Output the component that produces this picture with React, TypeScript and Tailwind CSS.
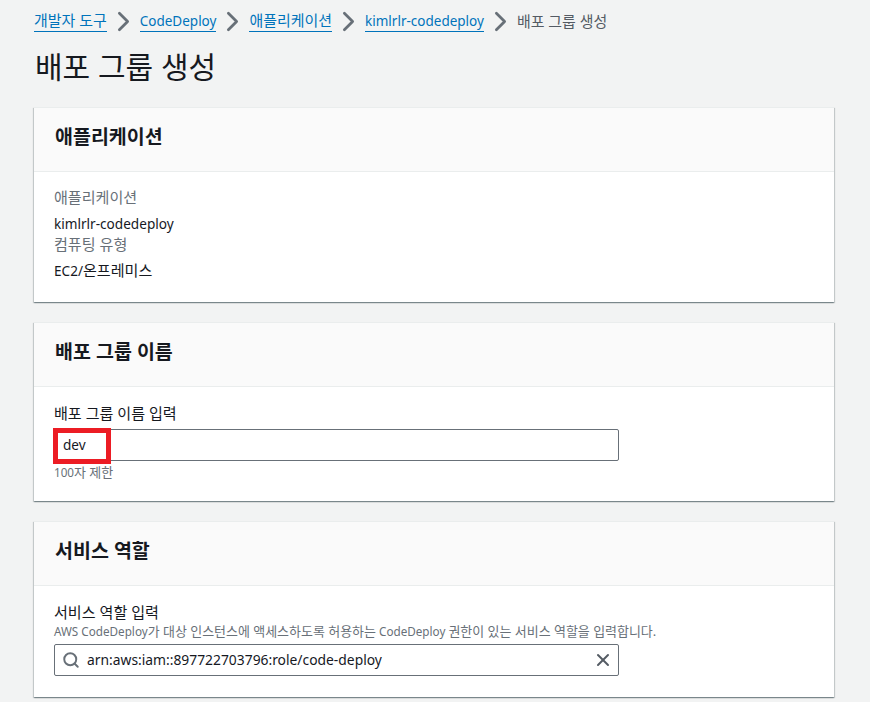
import type { ReactNode } from "react";
import { Search, X, ChevronRight } from "lucide-react";

// korean runs are drawn a little bigger than the latin ones
function K({ children }: { children: ReactNode }) {
  return <span className="text-[1.11em]">{children}</span>;
}

const crumbs: ReactNode[] = [<K>개발자 도구</K>, "CodeDeploy", <K>애플리케이션</K>, "kimlrlr-codedeploy"];

function Card({ title, children, className }: { title: string; children: ReactNode; className: string }) {
  return (
    <section className={`mb-5 bg-white border-t border-[#eaeded] shadow-[0_1px_1px_0_rgba(0,28,36,0.3),1px_1px_1px_0_rgba(0,28,36,0.15),-1px_1px_1px_0_rgba(0,28,36,0.15)] ${className}`}>
      <div className="h-[64px] px-[21px] pb-[6px] flex items-center bg-[#fafafa] border-b border-[#eaeded]">
        <h2 className="text-[19.5px] font-bold leading-[22px] text-[#16191f]">{title}</h2>
      </div>
      {children}
    </section>
  );
}

export default function App() {
  return (
    <div className="h-[702px] overflow-hidden bg-[#f2f3f3] pl-[34px] pr-[36px] text-[13.6px] text-[#16191f] font-['Noto_Sans','Noto_Sans_CJK_KR',sans-serif]">
      <nav className="h-[44px] flex items-start pt-[11px] text-[13.5px] leading-[20px]">
        {crumbs.map((c, i) => (
          <div key={i} className="flex items-center">
            <a className="text-[#0073bb] border-b border-[#0073bb] leading-[19px]">{c}</a>
            <ChevronRight className="w-[33px] h-[33px] -my-[6px] text-[#687078]" strokeWidth={2} />
          </div>
        ))}
        <span className="text-[#545b64]"><K>배포 그룹 생성</K></span>
      </nav>
      <h1 className="h-[63px] pt-[3px] pl-[1px] text-[30px] leading-[40px] font-normal">배포 그룹 생성</h1>

      <Card title="애플리케이션" className="h-[195px]">
        <div className="px-[20px] pt-[15px]">
          <div className="text-[#687078] leading-[20px]"><K>애플리케이션</K></div>
          <div className="mt-[6px] leading-[20px]">kimlrlr-codedeploy</div>
          <div className="text-[#687078] leading-[20px]"><K>컴퓨팅 유형</K></div>
          <div className="mt-[5px] leading-[20px]">EC2/<K>온프레미스</K></div>
        </div>
      </Card>

      <Card title="배포 그룹 이름" className="h-[179px]">
        <div className="px-[20px] pt-[16px]">
          <label className="block leading-[20px]"><K>배포 그룹 이름 입력</K></label>
          <div className="relative mt-[5px] w-[565px] h-[32px] px-[8px] flex items-center border border-[#687078] rounded-[2px] leading-[20px]">
            dev
            <div className="absolute -left-[2px] -top-[2px] w-[58px] h-[36px] border-[5px] border-[#ec1c24]" />
          </div>
          <div className="mt-[2px] text-[11.7px] leading-[18px] text-[#687078]">100<K>자 제한</K></div>
        </div>
      </Card>

      <Card title="서비스 역할" className="h-[176px]">
        <div className="px-[20px] pt-[16px]">
          <label className="block leading-[20px]"><K>서비스 역할 입력</K></label>
          <div className="text-[11.7px] leading-[16px] text-[#687078]">
            AWS CodeDeploy<K>가 대상 인스턴스에 액세스하도록 허용하는</K> CodeDeploy <K>권한이 있는 서비스 역할을 입력합니다.</K>
          </div>
          <div className="mt-[5px] w-[565px] h-[32px] pl-[7px] pr-[5px] flex items-center border border-[#687078] rounded-[2px]">
            <Search className="w-[18px] h-[18px] text-[#687078]" strokeWidth={2.6} />
            <span className="ml-[7px] flex-1 text-[13.85px] leading-[20px]">arn:aws:iam::897722703796:role/code-deploy</span>
            <X className="w-[20px] h-[20px] text-[#545b64]" strokeWidth={2.4} />
          </div>
        </div>
      </Card>
    </div>
  );
}
